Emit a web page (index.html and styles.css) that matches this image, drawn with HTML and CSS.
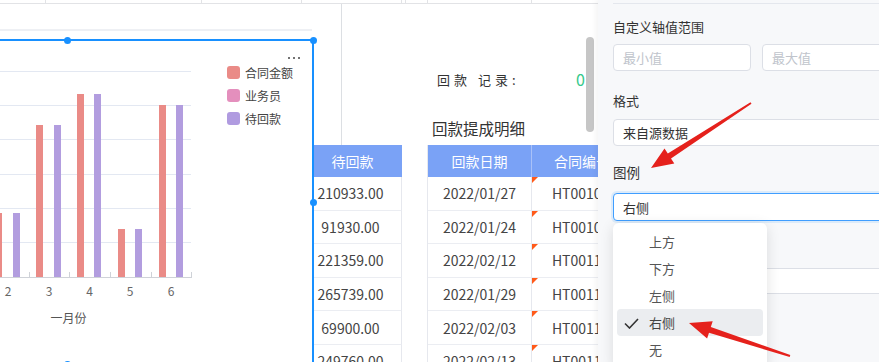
FILE: index.html
```html
<!DOCTYPE html>
<html lang="zh-CN">

<head>
    <meta charset="UTF-8">
    <meta name="viewport" content="width=device-width, initial-scale=1.0">
    <title>回款提成明细 - 图表设置</title>
    <link rel="stylesheet" href="styles.css">
</head>

<body>
    <div class="screen">
        <div class="sheet">
            <div class="sheet-top">
                <span class="c1"></span><span class="c2"></span><span class="c3"></span><span class="c4"></span>
                <span class="c5"></span><span class="c6"></span><span class="c7"></span>
            </div>
            <div class="sheet-body">
                <!-- chart widget (selected) -->
                <div class="chart-col">
                    <div class="chart-gap">
                        <div class="chart-rule"></div>
                    </div>
                    <div class="chart-box">
                        <span class="handle h-top"></span>
                        <span class="handle h-corner"></span>
                        <span class="handle h-right"></span>
                        <span class="handle h-bottom"></span>
                        <svg class="plot" width="227" height="322" viewBox="0 41 227 322">
                            <g class="grid-lines">
                                <line x1="0" y1="71.5" x2="191" y2="71.5" />
                                <line x1="0" y1="105.5" x2="191" y2="105.5" />
                                <line x1="0" y1="139.5" x2="191" y2="139.5" />
                                <line x1="0" y1="174.5" x2="191" y2="174.5" />
                                <line x1="0" y1="208.5" x2="191" y2="208.5" />
                                <line x1="0" y1="242.5" x2="191" y2="242.5" />
                            </g>
                            <line class="axis" x1="0" y1="277.5" x2="192" y2="277.5" />
                            <path class="ticks" d="M29.5 272V277M69.5 272V277M110.5 272V277M151.5 272V277M191.5 272V277" />
                            <g class="bar-red">
                                <rect x="-5" y="213" width="7" height="64" />
                                <rect x="36" y="125" width="7" height="152" />
                                <rect x="77" y="94" width="7" height="183" />
                                <rect x="118" y="229" width="7" height="48" />
                                <rect x="159" y="105" width="7" height="172" />
                            </g>
                            <g class="bar-purple">
                                <rect x="13" y="213" width="7" height="64" />
                                <rect x="54" y="125" width="7" height="152" />
                                <rect x="94" y="94" width="7" height="183" />
                                <rect x="135" y="229" width="7" height="48" />
                                <rect x="176" y="105" width="7" height="172" />
                            </g>
                            <g class="axis-labels">
                                <text x="8" y="296">2</text>
                                <text x="49" y="296">3</text>
                                <text x="89.5" y="296">4</text>
                                <text x="130" y="296">5</text>
                                <text x="171" y="296">6</text>
                            </g>
                            <text class="axis-name" x="68.5" y="323">一月份</text>
                        </svg>
                        <div class="legend">
                            <div class="legend-more"><i></i><i></i><i></i></div>
                            <div class="legend-item"><span class="swatch red"></span>合同金额</div>
                            <div class="legend-item"><span class="swatch pink"></span>业务员</div>
                            <div class="legend-item"><span class="swatch purple"></span>待回款</div>
                        </div>
                    </div>
                </div>

                <!-- left table, partly under the chart -->
                <div class="table-a">
                    <div class="col-line"></div>
                    <div class="th">待回款</div>
                    <div class="td">210933.00</div>
                    <div class="td">91930.00</div>
                    <div class="td">221359.00</div>
                    <div class="td">265739.00</div>
                    <div class="td">69900.00</div>
                    <div class="td">249760.00</div>
                </div>

                <!-- payment detail -->
                <div class="table-b">
                    <div class="record">
                        <span class="record-label">回款 记录:</span>
                        <span class="record-value">0</span>
                    </div>
                    <div class="detail-title">回款提成明细</div>
                    <div class="scrollbar"></div>
                    <div class="grid">
                        <div class="th">回款日期</div>
                        <div class="th">合同编号</div>
                        <div class="td">2022/01/27</div>
                        <div class="td code">HT001026</div>
                        <div class="td">2022/01/24</div>
                        <div class="td code">HT001031</div>
                        <div class="td">2022/02/12</div>
                        <div class="td code">HT001102</div>
                        <div class="td">2022/01/29</div>
                        <div class="td code">HT001115</div>
                        <div class="td">2022/02/03</div>
                        <div class="td code">HT001120</div>
                        <div class="td">2022/02/13</div>
                        <div class="td code">HT001138</div>
                    </div>
                </div>
            </div>
        </div>

        <!-- chart settings -->
        <aside class="panel">
            <div class="panel-prev"></div>
            <div class="field-label first">自定义轴值范围</div>
            <div class="range">
                <div class="input placeholder">最小值</div>
                <div class="input placeholder">最大值</div>
            </div>
            <div class="field-label format">格式</div>
            <div class="input select">来自源数据</div>
            <div class="field-label legend-label">图例</div>
            <div class="select-wrap">
                <div class="input select focused">右侧</div>
                <ul class="dropdown">
                    <li>上方</li>
                    <li>下方</li>
                    <li>左侧</li>
                    <li class="selected">
                        <svg class="check" width="15" height="11" viewBox="0 0 15 11">
                            <path d="M1 5.5L5.5 10L14 1" />
                        </svg>右侧
                    </li>
                    <li>无</li>
                </ul>
            </div>
            <div class="input behind"></div>
        </aside>

        <svg class="arrows" width="879" height="362" viewBox="0 0 879 362">
            <polygon points="751.5,103.8 671,158.5 674.3,163.5 651,168 664.5,148.5 667.8,153.5 750.5,102.2" />
            <polygon points="789.7,357 709,332.7 707.1,338.4 689,323 712.7,321.3 710.8,327 790.3,355" />
        </svg>
    </div>
</body>

</html>
```

FILE: styles.css
```css
* {
    box-sizing: border-box;
}

body {
    margin: 0;
    font-family: "Noto Sans CJK SC", "Noto Sans", sans-serif;
    color: #333;
    background: #fff;
}

.screen {
    position: relative;
    display: flex;
    width: 879px;
    height: 362px;
    overflow: hidden;
}

.sheet {
    flex: 0 0 598px;
    overflow: hidden;
}

/* spreadsheet cells above */
.sheet-top {
    display: flex;
    height: 4px;
    border-bottom: 1px solid #e2e3e6;
}

.sheet-top span {
    border-right: 1px solid #e2e3e6;
}

.c1 { width: 46px; }
.c2 { width: 156px; }
.c3 { width: 100px; }
.c4 { width: 100px; }
.c5 { width: 4px; }
.c6 { width: 22px; }
.c7 { width: 104px; }

.sheet-body {
    display: flex;
    height: 358px;
}

/* chart */
.chart-col {
    flex: 0 0 314px;
    position: relative;
    z-index: 2;
    background: #fff;
}

.chart-gap {
    height: 35px;
    padding-top: 25px;
}

.chart-rule {
    width: 312px;
    height: 2px;
    background: #eef0f4;
}

.chart-box {
    position: relative;
    display: flex;
    height: 326px;
    border-top: 2px solid #1890ff;
    border-right: 2px solid #1890ff;
    background: #fff;
}

.handle {
    position: absolute;
    width: 7px;
    height: 7px;
    border-radius: 50%;
    background: #1890ff;
}

.h-top { left: 63.5px; top: -4.5px; }
.h-corner { left: 309.5px; top: -4.5px; }
.h-right { left: 309.5px; top: 157.5px; }
.h-bottom { left: 63.5px; top: 319.5px; }

.plot {
    flex: 0 0 227px;
    display: block;
}

.grid-lines line {
    stroke: #e3e8f2;
    stroke-width: 1;
}

.axis {
    stroke: #cfd2d8;
    stroke-width: 1;
}

.ticks {
    stroke: #cfd2d8;
    stroke-width: 1;
}

.bar-red rect {
    fill: #ea8b87;
}

.bar-purple rect {
    fill: #b29ddf;
}

.axis-labels text {
    font-size: 12px;
    fill: #666;
    text-anchor: middle;
}

.axis-name {
    font-size: 12px;
    fill: #555;
    text-anchor: middle;
}

.legend {
    flex: 1;
    padding-top: 14px;
}

.legend-more {
    display: flex;
    justify-content: flex-end;
    align-items: center;
    gap: 3px;
    height: 6px;
    padding-right: 12px;
}

.legend-more i {
    width: 2px;
    height: 2px;
    border-radius: 50%;
    background: #444;
}

.legend-item {
    display: flex;
    align-items: center;
    height: 23px;
    font-size: 12px;
    color: #444;
}

.swatch {
    width: 13px;
    height: 13px;
    border-radius: 3px;
    margin-right: 5px;
}

.swatch.red { background: #ea8b87; }
.swatch.pink { background: #e48fbd; }
.swatch.purple { background: #b09be0; }

/* tables */
.th {
    height: 32px;
    display: flex;
    align-items: center;
    justify-content: center;
    background: #7aa2f6;
    color: #fff;
    font-size: 14px;
}

.td {
    height: 33.6px;
    display: flex;
    align-items: center;
    justify-content: center;
    font-size: 14px;
    color: #444;
    border-bottom: 1px solid #ebedf2;
    border-right: 1px solid #e6e8ee;
}

.table-a {
    flex: 0 0 102px;
    margin-left: -14px;
}

.col-line {
    margin-left: 41px;
    height: 141px;
    border-left: 1px solid #dcdfe3;
}

.table-a .th {
    padding-left: 3px;
}

.table-b {
    flex: 0 0 171px;
    margin-left: 25px;
    position: relative;
    overflow: hidden;
}

.record {
    display: flex;
    justify-content: space-between;
    align-items: center;
    margin-top: 65px;
    height: 20px;
    padding: 0 13px 0 10px;
    font-size: 13px;
}

.record-label {
    letter-spacing: 4px;
    color: #333;
}

.record-value {
    color: #34c98b;
    font-size: 16px;
}

.detail-title {
    margin-top: 28px;
    line-height: 22px;
    font-size: 15.5px;
    padding-left: 5px;
    color: #333;
}

.scrollbar {
    position: absolute;
    left: 159px;
    top: 33px;
    width: 8px;
    height: 95px;
    border-radius: 4px;
    background: #c6c6c6;
}

.grid {
    margin-top: 6px;
    display: grid;
    grid-template-columns: 104px 100px;
    width: 205px;
    border-left: 1px solid #e6e8ee;
}

.grid .th:first-child {
    border-right: 1px solid #a9c1f8;
}

.code {
    position: relative;
    padding-left: 6px;
}

.code::before {
    content: "";
    position: absolute;
    left: 0;
    top: 0;
    border-top: 6px solid #ff5a1a;
    border-right: 6px solid transparent;
}

/* settings panel */
.panel {
    flex: 0 0 281px;
    position: relative;
    z-index: 1;
    overflow: hidden;
    background: #f7f8fa;
    padding-left: 15px;
    box-shadow: -2px 0 6px rgba(0, 0, 0, 0.05);
}

.panel-prev {
    width: 300px;
    height: 4px;
    border-bottom: 1px solid #e4e7ed;
}

.field-label {
    line-height: 18px;
    font-size: 13px;
    color: #333;
}

.field-label.first { margin-top: 14px; }
.field-label.format { margin-top: 21px; }
.field-label.legend-label { margin-top: 17px; font-size: 13.5px; }

.range {
    display: flex;
    gap: 11px;
    margin-top: 8px;
    width: 300px;
}

.input {
    height: 27px;
    display: flex;
    align-items: center;
    padding-left: 9px;
    background: #fff;
    border: 1px solid #dcdfe6;
    border-radius: 4px;
    font-size: 13px;
    color: #333;
}

.range .input {
    width: 138px;
}

.placeholder {
    color: #c0c4cc;
}

.select {
    width: 300px;
    margin-top: 9px;
}

.select-wrap {
    position: relative;
    margin-top: 12px;
    z-index: 2;
}

.select.focused {
    margin-top: 0;
    height: 28px;
    border-color: #409eff;
    box-shadow: 0 0 0 2px rgba(64, 158, 255, 0.15);
}

.dropdown {
    position: absolute;
    top: 30px;
    left: 0;
    width: 154px;
    margin: 0;
    padding: 5px 0;
    list-style: none;
    background: #fff;
    border-radius: 6px;
    box-shadow: 0 3px 14px rgba(0, 0, 0, 0.12);
}

.dropdown li {
    position: relative;
    height: 27px;
    line-height: 27px;
    margin: 0 4px;
    padding-left: 32px;
    font-size: 13px;
    color: #555;
    border-radius: 4px;
}

.dropdown li.selected {
    background: #ebedf0;
    color: #444;
}

.check {
    position: absolute;
    left: 7px;
    top: 9px;
}

.check path {
    fill: none;
    stroke: #333;
    stroke-width: 1.6;
}

.behind {
    width: 300px;
    height: 26px;
    margin-top: 47px;
}

/* annotation arrows */
.arrows {
    position: absolute;
    left: 0;
    top: 0;
    pointer-events: none;
    z-index: 5;
}

.arrows polygon {
    fill: #e5211c;
}
```
